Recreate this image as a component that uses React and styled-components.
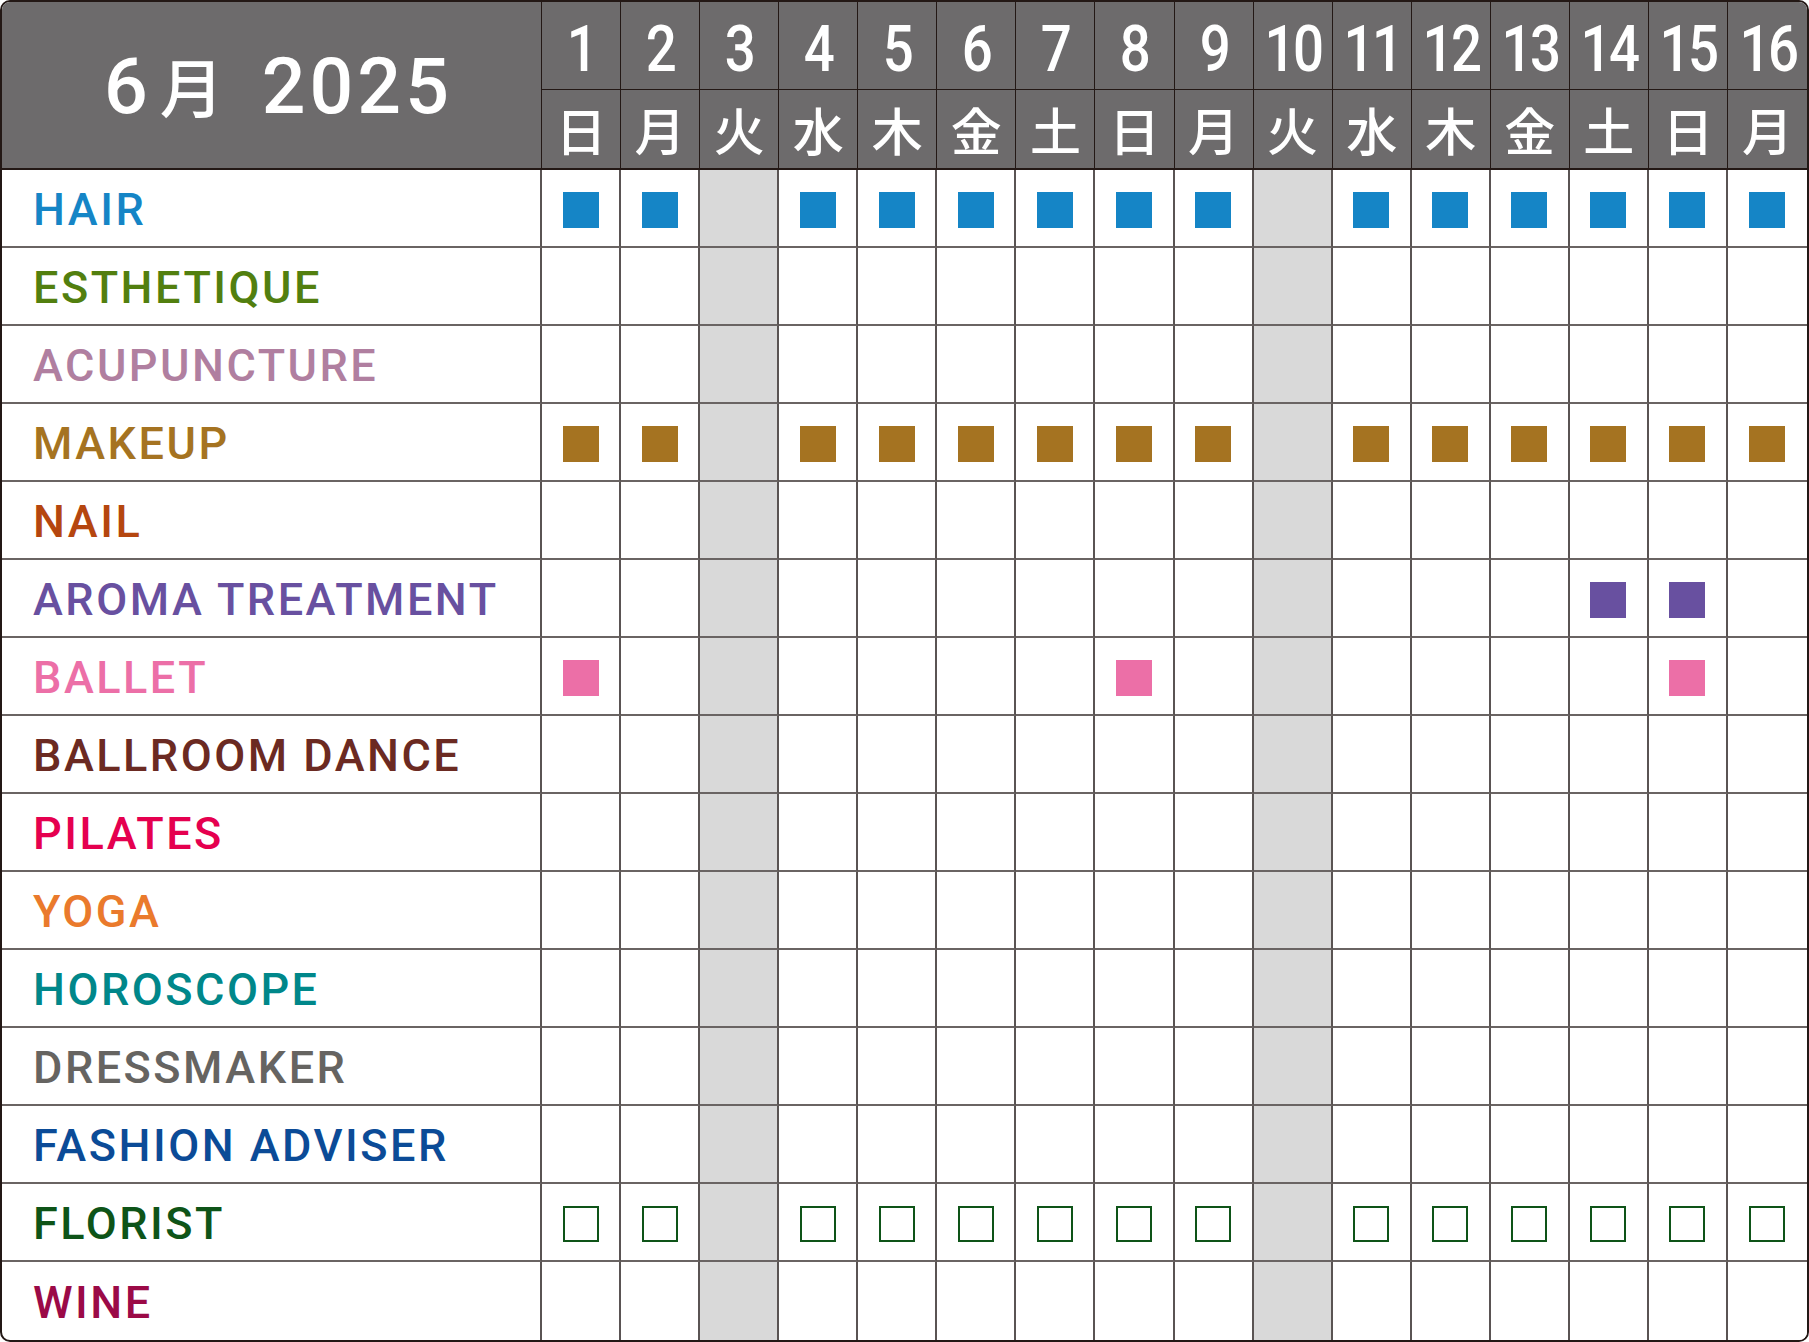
import React from "react";
import styled, { createGlobalStyle } from "styled-components";

const GlobalStyle = createGlobalStyle`
  html, body {
    margin: 0;
    padding: 0;
    background: #ffffff;
  }
  body {
    font-family: Roboto, "Noto Sans CJK JP", sans-serif;
  }
`;

const HEADER_BG = "#6d6b6c";
const DARK = "#231815";

const Board = styled.div`
  width: 1809px;
  height: 1342px;
  box-sizing: border-box;
  border: 2px solid ${DARK};
  border-radius: 10px;
  overflow: hidden;
  display: grid;
  grid-template-columns: 540px repeat(16, 1fr);
  grid-template-rows: 88px 80px repeat(15, 78px);
  background: #ffffff;
`;

const TitleCell = styled.div`
  grid-row: span 2;
  background: ${HEADER_BG};
  border-right: 1px solid ${DARK};
  border-bottom: 2px solid ${DARK};
  display: flex;
  align-items: center;
  justify-content: center;
  color: #ffffff;
  font-family: Roboto, "Noto Sans CJK JP", sans-serif;
  font-weight: 500;
  font-size: 77px;
  letter-spacing: 4px;
  padding-top: 4px;
  padding-left: 14px;
  box-sizing: border-box;
`;

const Kanji = styled.span`
  font-family: "Noto Sans CJK JP", sans-serif;
  font-size: 64px;
  font-weight: 500;
  letter-spacing: 0;
  margin: 0 38px 0 8px;
  position: relative;
  top: -3px;
`;

const HeadCell = styled.div`
  background: ${HEADER_BG};
  border-right: ${(p) => (p.$last ? "none" : `1px solid ${DARK}`)};
  border-bottom: ${(p) => (p.$week ? `2px solid ${DARK}` : `1px solid ${DARK}`)};
  display: flex;
  align-items: center;
  justify-content: center;
  color: #ffffff;
  box-sizing: border-box;
  overflow: hidden;
`;

const DateNum = styled.span`
  display: inline-block;
  font-family: Roboto, sans-serif;
  font-weight: 500;
  font-size: 65px;
  line-height: 1;
  letter-spacing: -3px;
  transform: scaleX(0.84);
  margin-top: 8px;
`;

const WeekChar = styled.span`
  font-family: "Noto Sans CJK JP", sans-serif;
  font-weight: 500;
  font-size: 51px;
  line-height: 1;
`;

const LabelCell = styled.div`
  border-right: 2px solid #5a5453;
  border-bottom: ${(p) => (p.$lastRow ? "none" : "2px solid #6a6463")};
  display: flex;
  align-items: center;
  padding-left: 31px;
  padding-top: 3px;
  box-sizing: border-box;
  color: ${(p) => p.$color};
  font-family: Roboto, sans-serif;
  font-weight: 500;
  font-size: 45px;
  letter-spacing: 2.5px;
  white-space: nowrap;
`;

const DayCell = styled.div`
  background: ${(p) => (p.$off ? "#d9d9d9" : "#ffffff")};
  border-right: ${(p) => (p.$last ? "none" : "2px solid #5a5453")};
  border-bottom: ${(p) => (p.$lastRow ? "none" : "2px solid #6a6463")};
  display: flex;
  align-items: center;
  justify-content: center;
  box-sizing: border-box;
`;

const Mark = styled.div`
  width: 36px;
  height: 36px;
  margin-top: 4px;
  box-sizing: border-box;
  background: ${(p) => (p.$outline ? "transparent" : p.$color)};
  border: ${(p) => (p.$outline ? `2px solid ${p.$color}` : "none")};
`;

const days = [
  [1, "日"], [2, "月"], [3, "火"], [4, "水"], [5, "木"], [6, "金"], [7, "土"], [8, "日"],
  [9, "月"], [10, "火"], [11, "水"], [12, "木"], [13, "金"], [14, "土"], [15, "日"], [16, "月"],
];
const offDays = [3, 10];
const working = days.map(([d]) => d).filter((d) => !offDays.includes(d));

const rows = [
  { label: "HAIR", color: "#1585c6", marks: working },
  { label: "ESTHETIQUE", color: "#527f0f", marks: [] },
  { label: "ACUPUNCTURE", color: "#b07fa0", marks: [] },
  { label: "MAKEUP", color: "#a57321", marks: working },
  { label: "NAIL", color: "#b5460f", marks: [] },
  { label: "AROMA TREATMENT", color: "#6850a0", marks: [14, 15] },
  { label: "BALLET", color: "#ec6fa7", marks: [1, 8, 15] },
  { label: "BALLROOM DANCE", color: "#6b2a22", marks: [] },
  { label: "PILATES", color: "#e5004f", marks: [] },
  { label: "YOGA", color: "#ea7a2c", marks: [] },
  { label: "HOROSCOPE", color: "#00878a", marks: [] },
  { label: "DRESSMAKER", color: "#666461", marks: [] },
  { label: "FASHION ADVISER", color: "#0b4b97", marks: [] },
  { label: "FLORIST", color: "#0e5418", marks: working, outline: true },
  { label: "WINE", color: "#9b0a47", marks: [] },
];

export default function App() {
  return (
    <>
      <GlobalStyle />
      <Board>
        <TitleCell>
          6<Kanji>月</Kanji>2025
        </TitleCell>
        {days.map(([d], i) => (
          <HeadCell key={`d${d}`} $last={i === days.length - 1}>
            <DateNum>{d}</DateNum>
          </HeadCell>
        ))}
        {days.map(([d, w], i) => (
          <HeadCell key={`w${d}`} $week $last={i === days.length - 1}>
            <WeekChar>{w}</WeekChar>
          </HeadCell>
        ))}
        {rows.map((row, ri) => {
          const lastRow = ri === rows.length - 1;
          return (
            <React.Fragment key={row.label}>
              <LabelCell $color={row.color} $lastRow={lastRow}>
                {row.label}
              </LabelCell>
              {days.map(([d], i) => (
                <DayCell
                  key={d}
                  $off={offDays.includes(d)}
                  $last={i === days.length - 1}
                  $lastRow={lastRow}
                >
                  {row.marks.includes(d) && (
                    <Mark $color={row.color} $outline={row.outline} />
                  )}
                </DayCell>
              ))}
            </React.Fragment>
          );
        })}
      </Board>
    </>
  );
}
